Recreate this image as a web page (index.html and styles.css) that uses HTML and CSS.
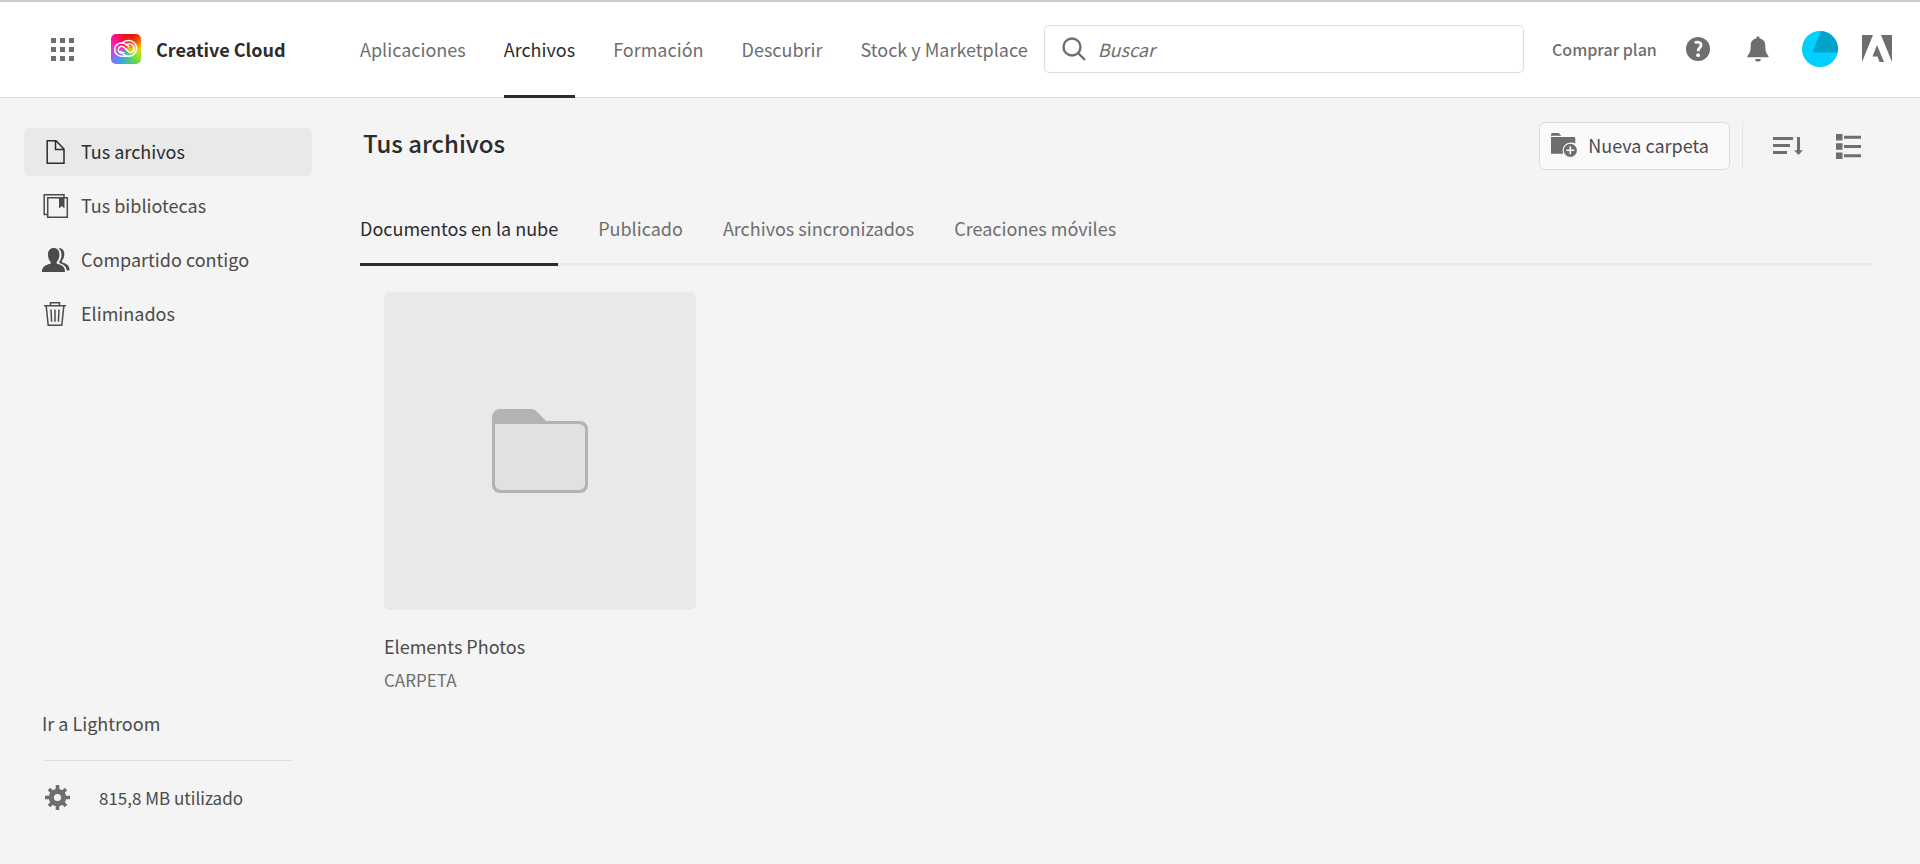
FILE: index.html
```html
<!DOCTYPE html>
<html lang="es">
<head>
<meta charset="utf-8">
<meta name="viewport" content="width=device-width, initial-scale=1">
<title>Creative Cloud</title>
<link rel="stylesheet" href="styles.css">
</head>
<body>
<header class="topbar">
  <button class="icon-button apps-button" type="button" aria-label="Aplicaciones y servicios">
    <svg class="icon" width="24" height="24" viewBox="0 0 24 24" fill="currentColor" aria-hidden="true"><path d="M1 1h5v5H1zM10 1h5v5h-5zM19 1h5v5h-5zM1 10h5v5H1zM10 10h5v5h-5zM19 10h5v5h-5zM1 19h5v5H1zM10 19h5v5h-5zM19 19h5v5h-5z"/></svg>
  </button>
  <a class="brand" href="#">
    <span class="brand-logo">
      <svg width="24" height="20" viewBox="0 0 24 20" fill="none" stroke="#fff" stroke-width="1.500" stroke-linecap="round" aria-hidden="true">
        <path d="M8 17.200A6.600 6.600 0 1 1 9.200 4.300C11 4.400 12.200 5.200 13.300 6.200L14.800 7.600"/>
        <path d="M8.200 4.200C9.700 2.500 12 1.500 14.700 1.500A7.850 7.850 0 0 1 14.700 17.200H8M14.700 17.200C12.700 17.200 11 16.400 9.700 15.200L6.800 12.400"/>
        <path d="M9.800 13.600C6.800 14.800 4.300 13.200 4.300 10.700S6.800 6.600 9.300 7.700C10.300 8.100 14.200 12.400 14.900 12.900C17 14.200 20 12.600 20 9.400C20 5.200 15 3.200 11.800 6"/>
      </svg>
    </span>
    <span>Creative Cloud</span>
  </a>
  <nav class="main-nav" aria-label="Principal">
    <a class="nav-link" href="#">Aplicaciones</a>
    <a class="nav-link is-active" href="#" aria-current="page">Archivos</a>
    <a class="nav-link" href="#">Formación</a>
    <a class="nav-link" href="#">Descubrir</a>
    <a class="nav-link" href="#">Stock y Marketplace</a>
  </nav>
  <label class="search">
    <svg class="icon" width="24" height="24" viewBox="0 0 24 24" fill="none" stroke="currentColor" stroke-width="2.400" aria-hidden="true"><circle cx="10" cy="10" r="8.500"/><path d="M16 16l7 7"/></svg>
    <input class="search-input" type="search" placeholder="Buscar" aria-label="Buscar">
  </label>
  <div class="account">
    <a class="buy-link" href="#">Comprar plan</a>
    <button class="icon-button" type="button" aria-label="Ayuda">
      <svg class="icon" width="24" height="24" viewBox="0 0 24 24" aria-hidden="true"><circle cx="12" cy="12" r="12" fill="currentColor"/><path d="M8.800 5.900C11.300 4.300 15 5 15 8.200C15 10.800 12.200 10.900 12.200 13.800V14.300" fill="none" stroke="#fff" stroke-width="2.800"/><circle cx="12.100" cy="18.200" r="1.900" fill="#fff"/></svg>
    </button>
    <button class="icon-button" type="button" aria-label="Notificaciones">
      <svg class="icon" width="24" height="26" viewBox="0 0 24 26" fill="currentColor" aria-hidden="true"><path d="M10.500 2.600V1.200C10.500.2 13.500.2 13.500 1.200V2.600C17.300 3.200 19.300 5.700 19.300 9.500C19.300 15.800 20.500 17.600 22 19.200C22.900 20.200 22.700 21.200 22.300 21.200H1.700C1.300 21.200 1.100 20.200 2 19.200C3.500 17.600 4.700 15.800 4.700 9.500C4.700 5.700 6.700 3.200 10.500 2.600zM9 23H15C14.800 24.600 13.600 25.600 12 25.600S9.200 24.600 9 23z"/></svg>
    </button>
    <button class="icon-button avatar" type="button" aria-label="Perfil">
      <svg width="36" height="36" viewBox="0 0 36 36" aria-hidden="true"><circle cx="18" cy="18" r="18" fill="#00cfff"/><path d="M19 0A18 18 0 0 1 35.600 21.500H10.500z" fill="#00a3cc"/></svg>
    </button>
    <a class="icon-button" href="#" aria-label="Adobe">
      <svg class="icon" width="30" height="27" viewBox="0 0 30 27" fill="currentColor" aria-hidden="true"><path d="M0 0H11L0 27zM19 0H30V27zM15 10L22 27H17.500L15.500 21.500H10.500z"/></svg>
    </a>
  </div>
</header>

<div class="layout">
  <aside class="sidebar">
    <nav class="side-nav" aria-label="Archivos">
      <a class="side-link is-active" href="#" aria-current="page">
        <svg width="28" height="26" viewBox="0 0 28 26" fill="none" stroke="currentColor" stroke-width="1.500" aria-hidden="true"><path d="M5.200 1.700H14L22 10V24.300H5.200zM13.500 2V10.500H22"/></svg>
        <span class="side-text">Tus archivos</span>
      </a>
      <a class="side-link" href="#">
        <svg width="28" height="26" viewBox="0 0 28 26" fill="none" stroke="currentColor" stroke-width="1.500" aria-hidden="true"><path d="M22 4.500V1.700H2.200V21.500H5M5.700 4.700H25.300V24.300H5.700z"/><path d="M17 4.700H22.500V15.500L19.800 13L17 15.500z" fill="currentColor" stroke="none"/></svg>
        <span class="side-text">Tus bibliotecas</span>
      </a>
      <a class="side-link" href="#">
        <svg width="28" height="26" viewBox="0 0 28 26" fill="currentColor" aria-hidden="true"><path d="M0 25C0 20 2.500 18.300 8.300 16.700C8.900 16.500 9 15.700 8.600 15C7 13 6 10.500 6 7.500C6 3.500 8.200 1 11.700 1S17.400 3.500 17.400 7.500C17.400 10.500 16.400 13 14.800 15C14.400 15.700 14.500 16.500 15.100 16.700C20.900 18.300 23 20 23 25z"/><path d="M16.500 1.400C20 .8 22.300 3.300 22.300 7C22.300 9.500 21.500 12 20 13.800C19.500 14.500 19.700 15.400 20.500 15.600C25.300 17 27.500 18.800 27.500 23.500H24.700C24.400 19.500 22 17.500 17.200 16C16.900 15.500 17.300 14.700 17.700 14.100C19 12 19.700 9.800 19.500 7C19.300 4.500 18.300 2.500 16.500 1.400z"/></svg>
        <span class="side-text">Compartido contigo</span>
      </a>
      <a class="side-link" href="#">
        <svg width="28" height="26" viewBox="0 0 28 26" fill="none" stroke="currentColor" stroke-width="1.500" aria-hidden="true"><path d="M2 4.700H24M8.500 4.500V1.700H17.500V4.500M4.200 5L6.200 24.300H19.800L21.800 5M9 8.500L9.600 20.700M13 8.500V20.700M17 8.500L16.400 20.700"/></svg>
        <span class="side-text">Eliminados</span>
      </a>
    </nav>
    <div class="side-footer">
      <a class="lightroom-link" href="#">Ir a Lightroom</a>
      <div class="storage">
        <svg class="icon" width="25" height="25" viewBox="0 0 25 25" aria-hidden="true"><g stroke="currentColor" stroke-width="3.600"><path d="M12.500 0V25M0 12.500H25M4 4L21 21M21 4L4 21"/></g><circle cx="12.500" cy="12.500" r="8.800" fill="currentColor"/><circle cx="12.500" cy="12.500" r="3.600" fill="#f4f4f4"/></svg>
        <span>815,8 MB utilizado</span>
      </div>
    </div>
  </aside>

  <main class="content">
    <div class="content-head">
      <h1 class="page-title">Tus archivos</h1>
      <div class="actions">
        <button class="new-folder" type="button">
          <svg class="icon" width="27" height="24" viewBox="0 0 27 24" aria-hidden="true"><path d="M0 2C0 .8.600 0 1.500 0H7.500L10.500 2.800H0zM0 4H23C23.700 4 24.300 4.600 24.300 5.300V10.500C18 7.500 9.500 12 12.200 20.800H0z" fill="currentColor"/><circle cx="19.300" cy="17.300" r="6.600" fill="currentColor"/><path d="M19.300 13.300V21.300M15.300 17.300H23.300" stroke="#fafafa" stroke-width="1.600"/></svg>
          <span>Nueva carpeta</span>
        </button>
        <div class="view-tools">
          <button class="icon-button" type="button" aria-label="Ordenar">
            <svg class="icon" width="30" height="18" viewBox="0 0 30 18" fill="currentColor" aria-hidden="true"><path d="M0 0H20V3H0zM0 7H17V10H0zM0 14H14V17H0zM24 0H27V13.200H29.800L25.500 18L21.200 13.200H24z"/></svg>
          </button>
          <button class="icon-button" type="button" aria-label="Vista de lista">
            <svg class="icon" width="25" height="25" viewBox="0 0 25 25" fill="currentColor" aria-hidden="true"><path d="M0 0H6.500V6.500H0zM0 9.200H6.500V15.700H0zM0 18.400H6.500V25H0zM8 1.800H25V4.800H8zM8 11H25V14H8zM8 20.200H25V23.200H8z"/></svg>
          </button>
        </div>
      </div>
    </div>
    <nav class="tabs" aria-label="Secciones">
      <a class="tab is-active" href="#" aria-current="page">Documentos en la nube</a>
      <a class="tab" href="#">Publicado</a>
      <a class="tab" href="#">Archivos sincronizados</a>
      <a class="tab" href="#">Creaciones móviles</a>
    </nav>
    <div class="file-grid">
      <a class="file-card" href="#">
        <span class="thumb">
          <svg width="96" height="84" viewBox="0 0 96 84" aria-hidden="true"><path d="M0 8A8 8 0 0 1 8 0H39C41.500 0 43 .7 44.500 2.200L54 12H88A8 8 0 0 1 96 20V76A8 8 0 0 1 88 84H8A8 8 0 0 1 0 76z" fill="#b3b3b3"/><path d="M3 15H87A6 6 0 0 1 93 21V75A6 6 0 0 1 87 81H9A6 6 0 0 1 3 75z" fill="#e1e1e1"/></svg>
        </span>
        <span class="file-name">Elements Photos</span>
        <span class="file-kind">CARPETA</span>
      </a>
    </div>
  </main>
</div>
</body>
</html>
```
FILE: styles.css
```css
*,
*::before,
*::after {
  box-sizing: border-box;
}

body {
  margin: 0;
  min-height: 100vh;
  display: flex;
  flex-direction: column;
  background: #f4f4f4;
  color: #4b4b4b;
  font-family: "Noto Sans CJK SC", "Noto Sans", sans-serif;
  font-size: 18px;
  line-height: 24px;
}

a {
  color: inherit;
  text-decoration: none;
}

button {
  font: inherit;
  cursor: pointer;
}

svg {
  display: block;
  flex: none;
}

.icon {
  color: #6e6e6e;
}

.icon-button {
  display: flex;
  padding: 0;
  border: 0;
  background: none;
}

/* Top bar */

.topbar {
  display: flex;
  align-items: center;
  height: 98px;
  padding: 0 28px 2px 50px;
  border-top: 2px solid #cacaca;
  border-bottom: 1px solid #dcdcdc;
  background: #fff;
}

.brand {
  display: flex;
  align-items: center;
  gap: 15px;
  width: 249px;
  margin-left: 37px;
  color: #2c2c2c;
  font-weight: 700;
  white-space: nowrap;
}

.brand-logo {
  display: flex;
  align-items: center;
  justify-content: center;
  width: 30px;
  height: 30px;
  border-radius: 5px;
  background:
    radial-gradient(circle at 70% 0, #e01010 0, rgba(224, 16, 16, 0) 45%),
    conic-gradient(from 0deg at 50% 50%, #f21c1c, #ff8a00 45deg, #ffd000 85deg, #9be02a 120deg, #4fd06a 155deg, #3aa0f0 205deg, #8c6cf0 235deg, #f02fc0 280deg, #ff108c 315deg, #f21c1c);
}

.main-nav {
  display: flex;
  align-self: stretch;
  gap: 38px;
  margin-bottom: -3px;
  color: #6e6e6e;
  white-space: nowrap;
}

.nav-link {
  display: flex;
  align-items: center;
  padding-bottom: 2px;
  border-top: 3px solid transparent;
  border-bottom: 3px solid transparent;
}

.nav-link.is-active {
  color: #2c2c2c;
  border-bottom-color: #2c2c2c;
}

.search {
  display: flex;
  flex: 1;
  align-items: center;
  gap: 12px;
  height: 48px;
  margin: 0 28px 0 16px;
  padding: 0 17px;
  border: 1px solid #dcdcdc;
  border-radius: 5px;
}

.search-input {
  flex: 1;
  min-width: 0;
  padding: 0;
  border: 0;
  outline: 0;
  background: none;
  color: #2c2c2c;
  font: inherit;
}

.search-input::placeholder {
  color: #6e6e6e;
  font-style: italic;
  opacity: 1;
}

.account {
  display: flex;
  align-items: center;
}

.buy-link {
  width: 106px;
  margin-right: 28px;
  color: #6e6e6e;
  font-size: 16px;
  font-weight: 500;
  white-space: nowrap;
}

.account .icon-button + .icon-button {
  margin-left: 36px;
}

.account .avatar.icon-button {
  margin-left: 32px;
}

.account .avatar + .icon-button {
  margin-left: 24px;
}

/* Page body */

.layout {
  display: grid;
  flex: 1;
  grid-template-columns: 312px 1fr;
  gap: 48px;
  padding-right: 48px;
}

.sidebar {
  display: flex;
  flex-direction: column;
  justify-content: space-between;
  padding: 30px 0 54px 24px;
}

.side-nav {
  display: grid;
  gap: 6px;
}

.side-link {
  display: flex;
  align-items: center;
  gap: 11px;
  height: 48px;
  padding-left: 18px;
  border-radius: 6px;
}

.side-text {
  padding-bottom: 2px;
}

.side-link.is-active {
  background: #e9e9e9;
  color: #2c2c2c;
}

.lightroom-link {
  display: block;
  margin-left: 18px;
}

.storage {
  display: flex;
  align-items: center;
  gap: 29px;
  margin: 25px 21px 0;
  padding-top: 24px;
  border-top: 1px solid #dcdcdc;
  font-size: 17px;
}

.content-head {
  display: flex;
  align-items: center;
  justify-content: space-between;
  padding-top: 24px;
}

.page-title {
  margin: 0 0 0 3px;
  padding-bottom: 6px;
  color: #2c2c2c;
  font-size: 24px;
  font-weight: 500;
  line-height: 32px;
}

.actions {
  display: flex;
}

.new-folder {
  display: flex;
  align-items: center;
  gap: 10px;
  height: 48px;
  padding: 0 20px 2px 11px;
  border: 1px solid #dcdcdc;
  border-radius: 6px;
  background: #fafafa;
  color: #4b4b4b;
}

.view-tools {
  display: flex;
  align-items: center;
  gap: 33px;
  margin-left: 12px;
  padding: 0 11px 0 30px;
  border-left: 1px solid #e6e6e6;
}

.tabs {
  display: flex;
  gap: 40px;
  margin-top: 34px;
  border-bottom: 3px solid #e9e9e9;
  color: #6e6e6e;
}

.tab {
  margin-bottom: -3px;
  padding: 12px 0 23px;
  border-bottom: 3px solid transparent;
}

.tab.is-active {
  border-bottom-color: #2c2c2c;
  color: #2c2c2c;
}

.file-grid {
  display: grid;
  grid-template-columns: repeat(auto-fill, 312px);
  gap: 24px;
  padding: 26px 24px;
}

.file-card {
  display: flex;
  flex-direction: column;
}

.thumb {
  display: flex;
  align-items: center;
  justify-content: center;
  aspect-ratio: 312 / 318;
  margin-bottom: 24px;
  border-radius: 6px;
  background: #e9e9e9;
}

.file-kind {
  margin-top: 10px;
  color: #6e6e6e;
  font-size: 17px;
}
```
